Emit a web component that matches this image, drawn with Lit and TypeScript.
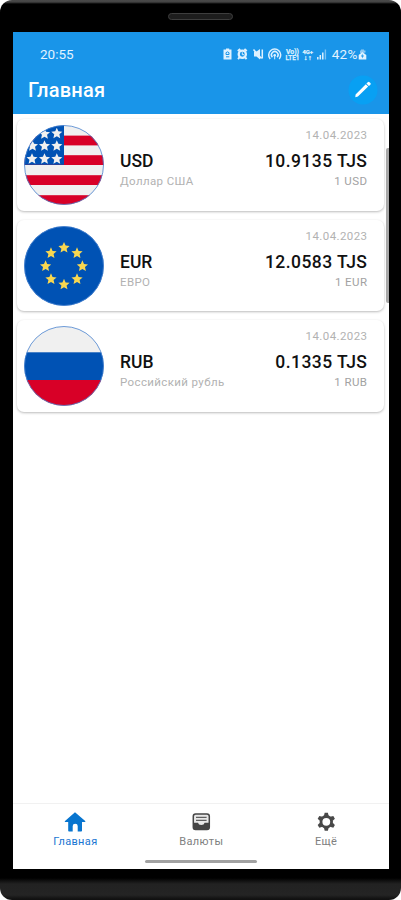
import { LitElement, html, svg, css } from "lit";
import { customElement, property } from "lit/decorators.js";

function star(cx: number, cy: number, r: number): string {
  const pts: string[] = [];
  for (let i = 0; i < 10; i++) {
    const a = -Math.PI / 2 + (i * Math.PI) / 5;
    const d = i % 2 ? r * 0.46 : r;
    pts.push(`${(cx + d * Math.cos(a)).toFixed(2)},${(cy + d * Math.sin(a)).toFixed(2)}`);
  }
  return pts.join(" ");
}

function usFlag() {
  const stars = [
    [20.5, 9], [32.8, 8.5],
    [8.5, 21], [20.5, 21], [32.8, 21],
    [8, 34], [20.5, 34], [32.8, 34],
  ];
  return svg`
    <rect width="80" height="80" fill="#f0f0f0"></rect>
    ${[10.6, 30.2, 50.2, 70.2].map((y) => svg`<rect y=${y} width="80" height="9.8" fill="#d80027"></rect>`)}
    <rect width="40" height="39.8" fill="#0052b4"></rect>
    ${stars.map(([x, y]) => svg`<polygon points=${star(x, y, 5.8)} fill="#f0f0f0"></polygon>`)}
  `;
}

function euFlag() {
  return svg`
    <rect width="80" height="80" fill="#0052b4"></rect>
    ${[0, 1, 2, 3, 4, 5, 6, 7].map((i) => {
      const a = (i * Math.PI) / 4;
      return svg`<polygon points=${star(40 + 18.4 * Math.sin(a), 40.2 - 18.4 * Math.cos(a), 5.9)} fill="#f8d750"></polygon>`;
    })}
  `;
}

function ruFlag() {
  return svg`
    <rect width="80" height="80" fill="#f0f0f0"></rect>
    <rect y="26.3" width="80" height="28" fill="#0052b4"></rect>
    <rect y="54" width="80" height="26" fill="#d80027"></rect>
  `;
}

@customElement("currency-card")
class CurrencyCard extends LitElement {
  @property() code = "";
  @property() name = "";
  @property() rate = "";
  @property() date = "";

  static styles = css`
    :host {
      display: flex;
      box-sizing: border-box;
      height: 91.5px;
      padding: 6px 17px 0 7px;
      border-radius: 7px;
      background: #fff;
      box-shadow: 0 1px 2.5px rgba(0, 0, 0, 0.27);
    }
    .flag { width: 80px; height: 80px; flex: none; display: block; }
    .names { margin-left: 16px; padding-top: 25px; }
    .values { margin-left: auto; padding-top: 3px; text-align: right; }
    .code, .rate { font-size: 17.5px; line-height: 23px; font-weight: 500; color: #111; white-space: nowrap; }
    .code { letter-spacing: 0; }
    .rate { letter-spacing: 0.45px; margin-right: -0.4px; }
    .name, .unit, .date { font-size: 11.5px; line-height: 17px; color: #b2b2b2; white-space: nowrap; }
    .name { letter-spacing: 0.38px; }
    .unit { color: #a2a2a2; letter-spacing: 0.4px; margin-right: -0.4px; }
    .date { line-height: 15px; margin-bottom: 7px; letter-spacing: 0.4px; margin-right: -0.4px; }
  `;

  render() {
    const flags: Record<string, () => unknown> = { USD: usFlag, EUR: euFlag, RUB: ruFlag };
    return html`
      <svg class="flag" viewBox="0 0 80 80">
        <defs><clipPath id="disc"><circle cx="40" cy="40" r="39.8"></circle></clipPath></defs>
        <g clip-path="url(#disc)">${flags[this.code]?.()}</g>
        <circle cx="40" cy="40" r="39.5" fill="none" stroke="#4a84d0" stroke-width="0.8"></circle>
      </svg>
      <div class="names">
        <div class="code">${this.code}</div>
        <div class="name">${this.name}</div>
      </div>
      <div class="values">
        <div class="date">${this.date}</div>
        <div class="rate">${this.rate} TJS</div>
        <div class="unit">1 ${this.code}</div>
      </div>
    `;
  }
}

@customElement("app-root")
class AppRoot extends LitElement {
  static styles = css`
    :host {
      display: block;
      width: 401px;
      height: 900px;
      overflow: hidden;
      background: #fff;
      font-family: Roboto, "Liberation Sans", sans-serif;
    }
    .phone {
      box-sizing: border-box;
      height: 900px;
      padding: 32px 12.5px 31px 13px;
      border-radius: 12px;
      position: relative;
      background: linear-gradient(#4a4a4a 0, #444 2px, #000 4px, #000 878px, #222 884px, #242424 895px, #111 899px);
    }
    .speaker {
      position: absolute;
      left: 168px;
      top: 13px;
      width: 65px;
      height: 7px;
      box-sizing: border-box;
      border: 1px solid #3e3e3e;
      border-radius: 4px;
      background: #1d1d1d;
    }
    .screen { height: 837px; display: flex; flex-direction: column; background: #fff; position: relative; }
    .header { height: 82px; flex: none; background: #1995e9; color: #fff; }
    .status { display: flex; align-items: center; height: 20px; padding: 12px 22px 0 27px; font-size: 13.5px; color: #e2f3ff; }
    .clock { letter-spacing: 0; }
    .indicators { margin-left: auto; display: block; }
    .battery { margin-left: 3.5px; letter-spacing: 0.2px; }
    .charge { display: block; }
    .title-row { display: flex; align-items: center; justify-content: space-between; padding: 9px 11px 0 15px; height: 34px; }
    .title { font-size: 20px; font-weight: 500; letter-spacing: 0.25px; }
    .edit { width: 30px; height: 30px; display: block; }
    .list { flex: 1; padding: 5px 4.5px 0 4px; display: flex; flex-direction: column; gap: 9.1px; }
    .scroll { position: absolute; right: 0; top: 116px; width: 3px; height: 155px; background: #a7a7a7; border-radius: 2px 0 0 2px; }
    .nav { height: 66px; box-sizing: border-box; border-top: 1px solid #f1f1f1; display: flex; flex: none; position: relative; }
    .tab { flex: 1; display: flex; flex-direction: column; align-items: center; padding: 7px 0 0; font-size: 11px; line-height: 18px; color: #808080; letter-spacing: 0.35px; }
    .tab.active { color: #1976d2; padding-right: 1px; }
    .icon { width: 22px; height: 22px; display: block; }
    .home-bar { position: absolute; left: 132px; bottom: 6px; width: 112px; height: 3px; border-radius: 2px; background: #a2a2a2; }
  `;

  render() {
    return html`
      <div class="phone">
        <div class="speaker"></div>
        <div class="screen">
          <div class="header">
            <div class="status">
              <span class="clock">20:55</span>
              <svg class="indicators" width="105" height="14" viewBox="0 0 105 14" fill="none" stroke="#def1ff">
                <path d="M3 2.5V1.5h3.2v1h2.3v10H.5v-10z" fill="#def1ff" stroke="none"></path>
                <path d="M3 5.7q1.5-1.8 3 0v1.8H3zM3 9.8h3.3" stroke="#1995e9" stroke-width="1"></path>
                <circle cx="19.3" cy="7.3" r="3.6" stroke-width="2.3"></circle>
                <path d="M14.8 4l2.4-2M23.8 4l-2.4-2M16.4 10.3l-1.3 1.8M22.2 10.3l1.3 1.8" stroke-width="1.9"></path>
                <path d="M19.3 5.3v2.4h1.8" stroke-width="1"></path>
                <path d="M31 4.5h2.5L37 2v10.5L33.5 9.5H31z" fill="#def1ff" stroke="none"></path>
                <path d="M30.5 2.5l8 9M39.3 2.5v9" stroke-width="1.5"></path>
                <path d="M47.2 12a6 6 0 1 1 9 0M49.4 10.2a3.3 3.3 0 1 1 4.7 0" stroke-width="1.5"></path>
                <circle cx="51.7" cy="8.2" r="1.3" fill="#def1ff" stroke="none"></circle><path d="M51.7 8.5v3.8"></path>
                <g fill="#def1ff" stroke="#def1ff" stroke-width="0.25" font-family="Roboto" font-weight="600">
                  <text x="63" y="6.5" font-size="6.8" textLength="13" lengthAdjust="spacingAndGlyphs">Vo))</text>
                  <text x="62.5" y="13" font-size="6.8" textLength="14" lengthAdjust="spacingAndGlyphs">LTE1</text>
                  <text x="79.5" y="6.5" font-size="6" textLength="10.5" lengthAdjust="spacingAndGlyphs">4G+</text>
                  <text x="80.5" y="12.9" font-size="7" textLength="8.5" lengthAdjust="spacingAndGlyphs">↓↑</text>
                </g>
                <path d="M94.8 10v2.5M97.3 8v4.5M99.8 5.5v7" stroke-width="1.5"></path>
                <path d="M102.4 2.5v10" stroke-width="1.4" opacity="0.5"></path>
              </svg>
              <span class="battery">42%</span>
              <svg class="charge" width="9" height="14" viewBox="0 0 9 14">
                <path d="M3 2.5h3v1h1.5v2L4.5 6H2V3.5h1z" fill="#8ec9f3"></path>
                <path d="M.7 8 4.3 5l4 3v4.5H.7z" fill="#e2f3ff"></path>
                <path d="M4.5 6.5L3 9.5h1.2v2L6 8.5H4.6z" fill="#1995e9"></path>
              </svg>
            </div>
            <div class="title-row">
              <span class="title">Главная</span>
              <svg class="edit" viewBox="0 0 30 30">
                <circle cx="15" cy="15" r="14.5" fill="#08a0f3"></circle>
                <path d="M7.6 19.6 17.8 9.2l2.4 2.4-10.3 10-2.6.6zM18.4 8.6l1.4-1.4q.9-.9 1.7 0l.9.9q.8.8 0 1.6l-1.5 1.4z" fill="#fff"></path>
              </svg>
            </div>
          </div>
          <div class="list">
            <currency-card code="USD" name="Доллар США" rate="10.9135" date="14.04.2023"></currency-card>
            <currency-card code="EUR" name="ЕВРО" rate="12.0583" date="14.04.2023"></currency-card>
            <currency-card code="RUB" name="Российский рубль" rate="0.1335" date="14.04.2023"></currency-card>
          </div>
          <div class="scroll"></div>
          <div class="nav">
            <div class="tab active">
              <svg class="icon" viewBox="0 0 22 22"><path d="M11 1.2 21.2 10q.8 1.1-.5 1.1H18v8.7q0 .7-.8.7h-3.5v-5.6q0-2.2-2.5-2.2t-2.5 2.2v5.6H5q-.8 0-.8-.7v-8.7H1.4q-1.3 0-.4-1.1z" fill="#0875cf"></path></svg>
              <span>Главная</span>
            </div>
            <div class="tab">
              <svg class="icon" viewBox="0 0 22 22">
                <rect x="3.3" y="3" width="16" height="15.5" rx="2.3" fill="#e8e8e8" stroke="#454545" stroke-width="1.5"></rect>
                <path d="M6 6.3h10.6M6 9.3h10.6" stroke="#606060" stroke-width="1.2"></path>
                <path d="M3.3 11.8H8q.4 2.3 3.3 2.3t3.3-2.3h4.7V17q0 1.5-1.5 1.5h-13q-1.5 0-1.5-1.5z" fill="#444"></path>
              </svg>
              <span>Валюты</span>
            </div>
            <div class="tab">
              <svg class="icon" viewBox="0 0 22 22">
                <g transform="translate(11.3 10.8)">
                  <circle r="5.3" fill="none" stroke="#484848" stroke-width="2.8"></circle>
                  ${[0, 60, 120, 180, 240, 300].map((a) => svg`<path d="M-2.4-5.8-1.6-9h3.2l.8 3.2z" fill="#484848" transform="rotate(${a})"></path>`)}
                </g>
              </svg>
              <span>Ещё</span>
            </div>
            <div class="home-bar"></div>
          </div>
        </div>
      </div>
    `;
  }
}
